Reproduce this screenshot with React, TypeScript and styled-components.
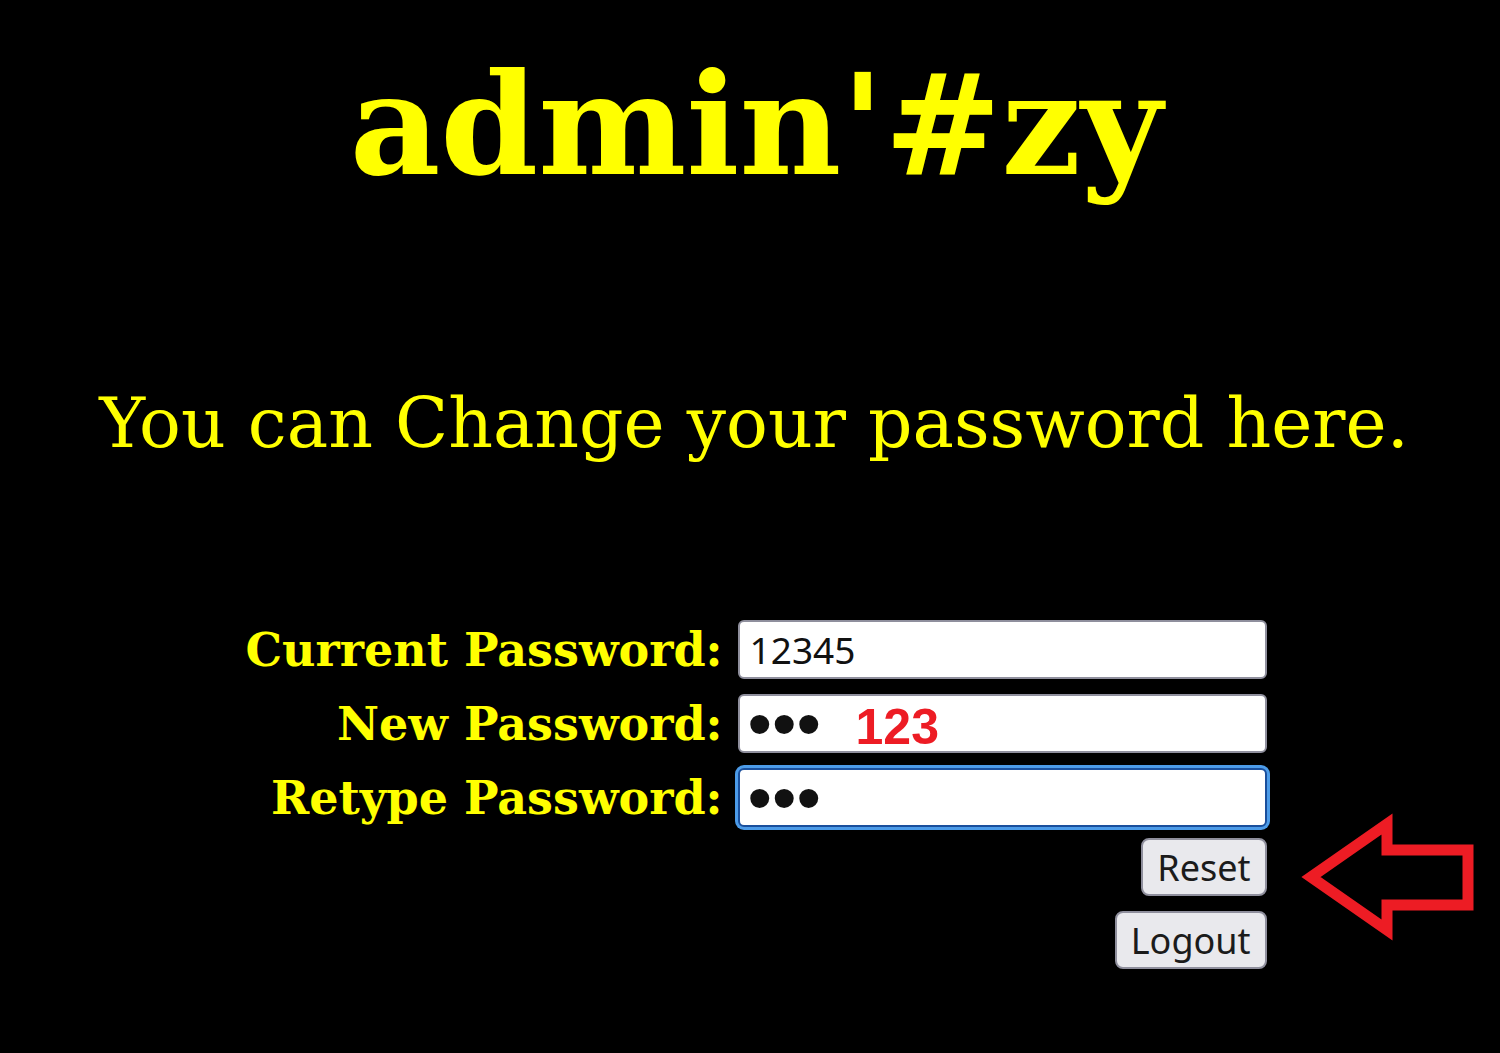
import styled, { createGlobalStyle } from 'styled-components';

const GlobalStyle = createGlobalStyle`
  html, body {
    margin: 0;
    padding: 0;
    background: #000;
  }
`;

const Page = styled.div`
  min-height: 1053px;
  background: #000;
  display: flex;
  flex-direction: column;
  align-items: center;
  padding-top: 44px;
  box-sizing: border-box;
`;

const Title = styled.h1`
  margin: 0;
  font-family: 'DejaVu Serif', serif;
  font-weight: bold;
  font-size: 140px;
  line-height: 163px;
  color: #ffff00;
  padding-left: 12px;
`;

const Subtitle = styled.p`
  margin: 175px 0 0;
  font-family: 'DejaVu Serif', serif;
  font-size: 69.5px;
  line-height: 81px;
  color: #ffff00;
  padding-left: 8px;
`;

const Form = styled.form`
  margin-top: 157px;
  padding-left: 12px;
  display: grid;
  grid-template-columns: auto 529px;
  column-gap: 15px;
  row-gap: 15px;
  align-items: center;
`;

const Label = styled.label`
  justify-self: end;
  font-family: 'DejaVu Serif', serif;
  font-weight: bold;
  font-size: 46px;
  color: #ffff00;
  white-space: nowrap;
`;

const Field = styled.div`
  position: relative;
`;

const Input = styled.input<{ $focused?: boolean }>`
  box-sizing: border-box;
  width: 100%;
  height: 59px;
  padding: 0 10px;
  margin: 0;
  font-family: 'Noto Sans', 'Open Sans', sans-serif;
  font-size: 37px;
  color: #111;
  background: #fff;
  border: 2px solid ${(p) => (p.$focused ? '#1a4f9c' : '#8f8f9d')};
  border-radius: 6px;
  box-shadow: ${(p) => (p.$focused ? '0 0 0 3px #4c9be8' : 'none')};
  outline: none;

  &[type='password'] {
    font-family: 'Liberation Sans', Arial, sans-serif;
    font-size: 70px;
    padding-left: 8px;
  }
`;

const Note = styled.span`
  position: absolute;
  left: 118px;
  top: 7px;
  font-family: 'Liberation Sans', Arial, sans-serif;
  font-weight: bold;
  font-size: 50px;
  line-height: 52px;
  color: #ed1c24;
  pointer-events: none;
`;

const Actions = styled.div`
  grid-column: 2;
  display: flex;
  flex-direction: column;
  align-items: flex-end;
  gap: 15px;
  margin-top: -4px;
`;

const ButtonWrap = styled.div`
  position: relative;
`;

const Button = styled.button`
  box-sizing: border-box;
  height: 58px;
  padding: 0 14px;
  font-family: 'Noto Sans', 'Open Sans', sans-serif;
  font-size: 36px;
  color: #1b1b1b;
  background: #e9e9ed;
  border: 2px solid #8f8f9d;
  border-radius: 8px;
  cursor: pointer;
`;

const Arrow = styled.svg`
  position: absolute;
  left: calc(100% + 30px);
  top: -25px;
`;

function LeftArrow() {
  return (
    <Arrow width="182" height="128" viewBox="0 0 182 128">
      <polygon
        points="14,64 90,11 90,37 171,37 171,92 90,92 90,117"
        fill="none"
        stroke="#ed1c24"
        strokeWidth="11"
        strokeLinejoin="miter"
      />
    </Arrow>
  );
}

export default function App() {
  return (
    <>
      <GlobalStyle />
      <Page>
        <Title>admin'#zy</Title>
        <Subtitle>You can Change your password here.</Subtitle>
        <Form onSubmit={(e) => e.preventDefault()}>
          <Label htmlFor="current">Current Password:</Label>
          <Field>
            <Input id="current" type="text" defaultValue="12345" />
          </Field>

          <Label htmlFor="newpass">New Password:</Label>
          <Field>
            <Input id="newpass" type="password" defaultValue="123" />
            <Note>123</Note>
          </Field>

          <Label htmlFor="retype">Retype Password:</Label>
          <Field>
            <Input id="retype" type="password" defaultValue="123" $focused autoFocus />
          </Field>

          <Actions>
            <ButtonWrap>
              <Button type="reset">Reset</Button>
              <LeftArrow />
            </ButtonWrap>
            <ButtonWrap>
              <Button type="button">Logout</Button>
            </ButtonWrap>
          </Actions>
        </Form>
      </Page>
    </>
  );
}
